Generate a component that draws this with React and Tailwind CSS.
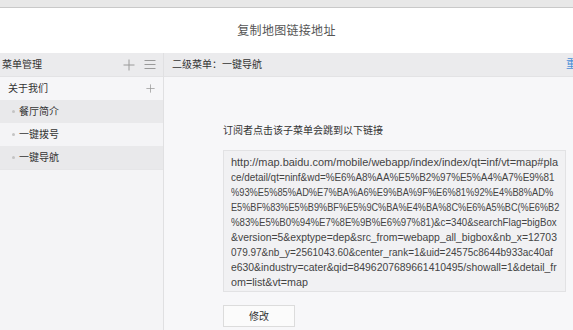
import React, { useLayoutEffect, useRef, useState } from 'react';

// wrapped as in the reference; each line is squeezed to the width it has there
const urlLines = [
  ['http://map.baidu.com/mobile/webapp/index/index/qt=inf/vt=map#pla', 327],
  ['ce/detail/qt=ninf&wd=%E6%A8%AA%E5%B2%97%E5%A4%A7%E9%81', 324],
  ['%93%E5%85%AD%E7%BA%A6%E9%BA%9F%E6%81%92%E4%B8%AD%', 322],
  ['E5%BF%83%E5%B9%BF%E5%9C%BA%E4%BA%8C%E6%A5%BC(%E6%B2', 328],
  ['%83%E5%B0%94%E7%8E%9B%E6%97%81)&c=340&searchFlag=bigBox', 326],
  ['&version=5&exptype=dep&src_from=webapp_all_bigbox&nb_x=12703', 326],
  ['079.97&nb_y=2561043.60&center_rank=1&uid=24575c8644b933ac40af', 322],
  ['e630&industry=cater&qid=8496207689661410495/showall=1&detail_fr', 326],
  ['om=list&vt=map', 77],
];

function FitLine({ text, width }) {
  const ref = useRef(null);
  const [scale, setScale] = useState(1);
  useLayoutEffect(() => {
    const w = ref.current.offsetWidth;
    if (w) setScale(width / w);
  }, [width]);
  return (
    <div className="h-[15px]">
      <span ref={ref} className="inline-block whitespace-pre origin-left" style={{ transform: `scaleX(${scale})` }}>
        {text}
      </span>
    </div>
  );
}

function Plus({ size = 11 }) {
  return (
    <svg width={size} height={size} viewBox="0 0 12 12" fill="none" stroke="#9a9a9a" strokeWidth="1">
      <path d="M6 0.5v11M0.5 6h11" />
    </svg>
  );
}

function Bars() {
  return (
    <svg width="12" height="11" viewBox="0 0 12 11" fill="none" stroke="#9a9a9a" strokeWidth="1">
      <path d="M0.5 1.5h11M0.5 5.5h11M0.5 9.5h11" />
    </svg>
  );
}

function SubItem({ label, shade }) {
  return (
    <div className={`flex items-center h-[23px] pl-[12px] gap-[4px] ${shade ? 'bg-[#e9e9eb]' : 'bg-[#f4f4f6]'}`}>
      <span className="w-[3px] h-[3px] rounded-full bg-[#c4c4c4]" />
      <span>{label}</span>
    </div>
  );
}

export default function App() {
  return (
    <div
      className="w-[573px] h-[330px] overflow-hidden bg-white flex flex-col text-[#333]"
      style={{ fontFamily: '"Liberation Sans", "Noto Sans CJK SC", sans-serif' }}
    >
      <div className="h-[8px] bg-[#e8e8e8] border-b border-[#c9c9c9] shrink-0" />

      <div className="h-[45px] flex items-center justify-center text-[12px] text-[#555] tracking-[0.3px] shrink-0">
        复制地图链接地址
      </div>

      <div className="flex flex-1 min-h-0 text-[10px]">
        <div className="w-[164px] shrink-0 bg-[#f4f4f6] border-r border-[#e0e0e2] flex flex-col">
          <div className="h-[24px] bg-[#ebebed] border-b border-[#e3e3e5] flex items-center justify-between pl-[2px] pr-[7px]">
            <span>菜单管理</span>
            <div className="flex items-center gap-[9px]">
              <Plus size={12} />
              <Bars />
            </div>
          </div>
          <div className="h-[23px] bg-[#f6f6f8] flex items-center justify-between pl-[8px] pr-[8px]">
            <span>关于我们</span>
            <Plus size={9} />
          </div>
          <SubItem label="餐厅简介" shade />
          <SubItem label="一键拨号" />
          <SubItem label="一键导航" shade />
          <div className="border-t border-[#e6e6e8]" />
        </div>

        <div className="flex-1 min-w-0 bg-[#f7f7f9] flex flex-col">
          <div className="h-[24px] bg-[#ebebed] border-b border-[#e3e3e5] flex items-center justify-between pl-[8px] overflow-hidden">
            <span>二级菜单：一键导航</span>
            <span className="text-[11px] text-[#4a8fd8] mr-[-4px]">重</span>
          </div>
          <div className="pl-[59px] pr-[7px]">
            <div className="mt-[46px] h-[14px] flex items-center">订阅者点击该子菜单会跳到以下链接</div>
            <div className="mt-[13px] h-[142px] bg-[#f1f1f3] border border-[#e2e2e4] pl-[7px] pt-[4px] text-[11px] leading-[15px] text-[#444] overflow-hidden">
              {urlLines.map(([text, width], i) => (
                <FitLine key={i} text={text} width={width} />
              ))}
            </div>
            <button className="mt-[13px] w-[72px] h-[22px] bg-[#fbfbfb] border border-[#dcdcdc] text-[10px] text-[#333]">
              修改
            </button>
          </div>
        </div>
      </div>
    </div>
  );
}
